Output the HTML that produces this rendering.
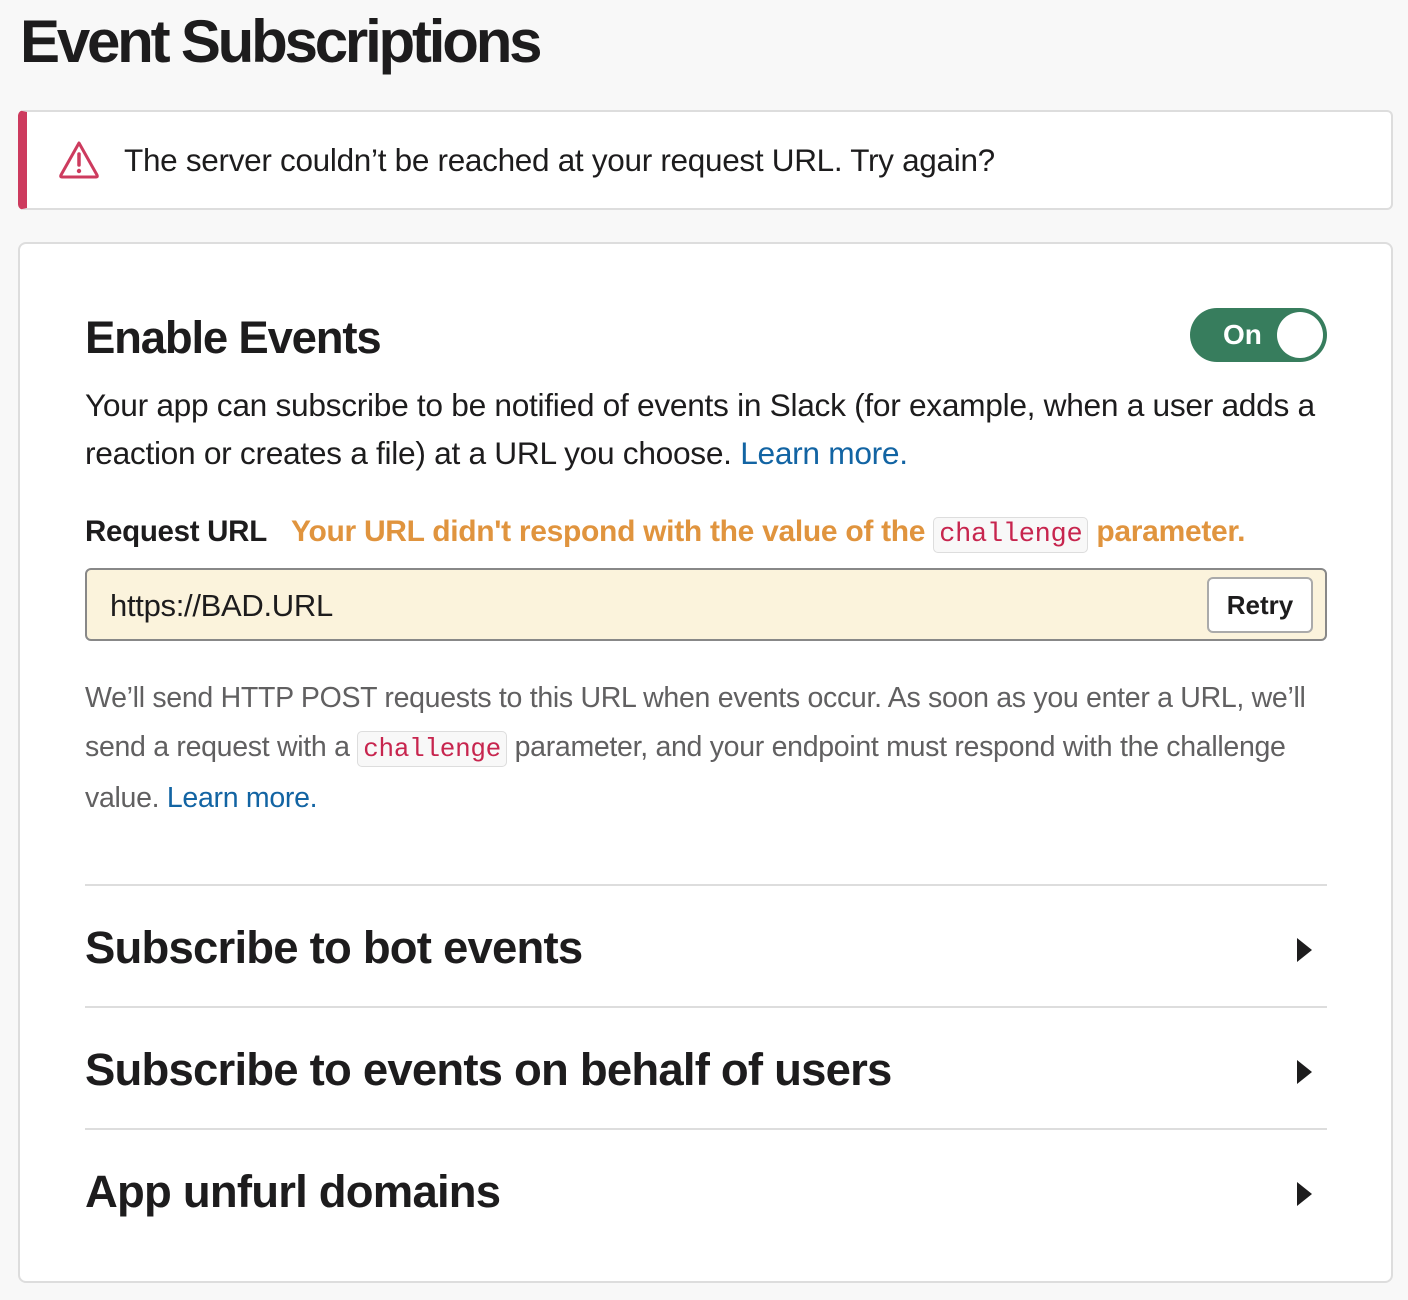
<!DOCTYPE html>
<html><head><meta charset="utf-8"><style>
*{margin:0;padding:0;box-sizing:border-box}
body{width:1408px;height:1300px;background:#f8f8f8;font-family:"Liberation Sans",sans-serif;color:#1d1c1d;position:relative;overflow:hidden}
.a{position:absolute;white-space:nowrap}
h1{position:absolute;left:20px;top:4px;font-size:60px;font-weight:bold;letter-spacing:-3.2px;line-height:76px}
.alert{position:absolute;left:18px;top:110px;width:1375px;height:100px;background:#fff;border:2px solid #ddd;border-left:9px solid #cd3b5e;border-radius:6px}
.card{position:absolute;left:18px;top:242px;width:1375px;height:1041px;background:#fff;border:2px solid #ddd;border-radius:8px}
.p{font-size:31px;letter-spacing:-0.3px}
.code{font-family:"Liberation Mono",monospace;color:#c7254e;background:#f8f8f8;border:1.5px solid #ddd;border-radius:5px;padding:2px 5px;font-size:26px}
.h2{font-size:45.5px;font-weight:bold;letter-spacing:-0.8px}
.hr{position:absolute;left:85px;width:1242px;height:2px;background:#ddd}
.tri{position:absolute;left:1297px;width:0;height:0;border-top:12px solid transparent;border-bottom:12px solid transparent;border-left:15px solid #1d1c1d}
a{color:#1264a3;text-decoration:none}
</style></head><body>
<h1>Event Subscriptions</h1>
<div class="alert"></div>
<svg class="a" style="left:58px;top:140px" width="42" height="40" viewBox="0 0 42 40"><path d="M21 3 L39 35 Q40 37 38 37 L4 37 Q2 37 3 35 Z" fill="none" stroke="#cd3b5e" stroke-width="3" stroke-linejoin="round"/><line x1="21" y1="14" x2="21" y2="25" stroke="#cd3b5e" stroke-width="3.5" stroke-linecap="round"/><circle cx="21" cy="31" r="2.2" fill="#cd3b5e"/></svg>
<div class="a p" style="left:124px;top:142px;line-height:36px;font-size:31.5px">The server couldn’t be reached at your request URL. Try again?</div>
<div class="card"></div>
<div class="a h2" style="left:85px;top:312px;letter-spacing:-1.2px">Enable Events</div>
<div class="a" style="left:1190px;top:308px;width:137px;height:54px;background:#377d5d;border-radius:27px"><span style="position:absolute;left:33px;top:11px;color:#fff;font-weight:bold;font-size:28px">On</span><span style="position:absolute;right:4px;top:4px;width:46px;height:46px;border-radius:50%;background:#fff"></span></div>
<div class="a p" style="left:85px;top:381px;line-height:48px;white-space:normal;width:1250px;font-size:31.7px">Your app can subscribe to be notified of events in Slack (for example, when a user adds a reaction or creates a file) at a URL you choose. <a>Learn more.</a></div>
<div class="a p" style="left:85px;top:515px;font-weight:bold;font-size:29.5px">Request URL</div>
<div class="a p" style="left:291px;top:515px;font-weight:bold;color:#e0943e;font-size:30px">Your URL didn't respond with the value of the <span class="code" style="font-weight:normal;font-size:27px">challenge</span> parameter.</div>
<div class="a" style="left:85px;top:568px;width:1242px;height:73px;background:#fbf3dc;border:2px solid #888;border-radius:6px"></div>
<div class="a p" style="left:110px;top:588px">https://BAD.URL</div>
<div class="a" style="left:1207px;top:577px;width:106px;height:56px;background:#fff;border:2px solid #aaa;border-radius:6px;font-weight:bold;font-size:26px;text-align:center;line-height:52px">Retry</div>
<div class="a" style="left:85px;top:674px;width:1250px;white-space:normal;font-size:28.5px;line-height:49px;color:#616061;letter-spacing:-0.3px">We’ll send HTTP POST requests to this URL when events occur. As soon as you enter a URL, we’ll send a request with a <span class="code">challenge</span> parameter, and your endpoint must respond with the challenge value. <a>Learn more.</a></div>
<div class="hr" style="top:884px"></div>
<div class="a h2" style="left:85px;top:922px">Subscribe to bot events</div>
<div class="tri" style="top:938px"></div>
<div class="hr" style="top:1006px"></div>
<div class="a h2" style="left:85px;top:1044px">Subscribe to events on behalf of users</div>
<div class="tri" style="top:1060px"></div>
<div class="hr" style="top:1128px"></div>
<div class="a h2" style="left:85px;top:1166px">App unfurl domains</div>
<div class="tri" style="top:1182px"></div>
</body></html>
